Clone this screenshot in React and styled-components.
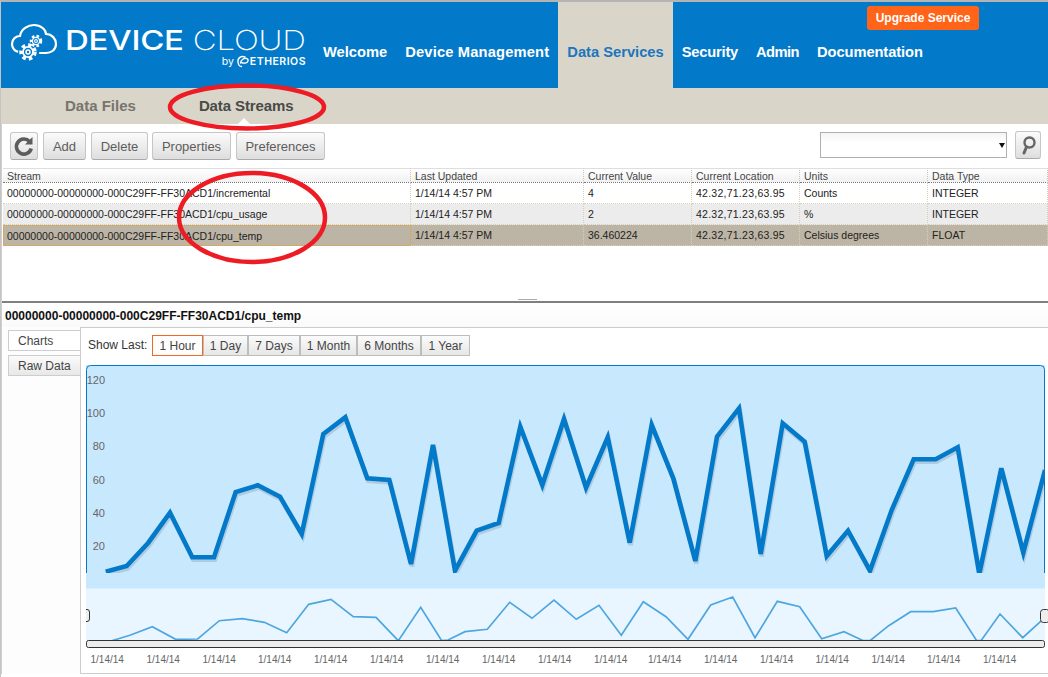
import React from 'react';
import styled, { createGlobalStyle } from 'styled-components';

const GlobalStyle = createGlobalStyle`
  html, body {
    margin: 0;
    padding: 0;
    background: #fff;
  }
  * {
    box-sizing: border-box;
  }
`;

const Page = styled.div`
  position: relative;
  width: 1048px;
  height: 677px;
  overflow: hidden;
  background: #fff;
  border-top: 2px solid #b4b4b4;
  border-left: 1px solid #c4c4c4;
  font-family: "Liberation Sans", Arial, sans-serif;
  color: #333;
`;

const Header = styled.header`
  display: flex;
  height: 86px;
  background: #0279c9;
  color: #fff;
`;

const Logo = styled.div`
  display: flex;
  width: 313px;
  padding: 21px 0 0 9px;
`;

const LogoText = styled.div`
  display: flex;
  flex-direction: column;
  width: 241px;
  margin-left: 5px;
  padding-top: 4px;
`;

const Wordmark = styled.div`
  font-family: Inter, "Liberation Sans", sans-serif;
  font-size: 27.5px;
  line-height: 26px;
  white-space: nowrap;
  letter-spacing: -0.2px;
  transform: scaleX(1.2);
  transform-origin: left center;
`;

const WordBold = styled.span`
  font-weight: 500;
`;

const WordLight = styled.span`
  font-weight: 200;
`;

const ByLine = styled.div`
  display: flex;
  align-items: center;
  align-self: flex-end;
  margin-top: 2px;
  font-family: Inter, "Liberation Sans", sans-serif;
  font-size: 10.5px;
  font-weight: 600;
  line-height: 12px;
  letter-spacing: 0.5px;
`;

const ByWord = styled.span`
  font-weight: 400;
  letter-spacing: 0;
  margin-right: 2px;
`;

const NavArea = styled.div`
  display: grid;
  width: 665px;
`;

const Nav = styled.nav`
  grid-area: 1 / 1;
  display: flex;
`;

const NavItem = styled.a`
  display: flex;
  align-items: center;
  padding: 14px 9px 0;
  font-size: 14.7px;
  font-weight: bold;
  white-space: nowrap;
  letter-spacing: ${(p) => p.$track || 0}px;
  color: ${(p) => (p.$active ? '#1a76be' : '#fff')};
  background: ${(p) => (p.$active ? '#d9d5c9' : 'transparent')};
`;

const UpgradeButton = styled.button`
  grid-area: 1 / 1;
  justify-self: end;
  align-self: start;
  width: 112px;
  height: 24px;
  margin-top: 4px;
  padding: 0;
  border: 0;
  border-radius: 3px;
  background: #ff6418;
  color: #fff;
  font-family: inherit;
  font-size: 12px;
  font-weight: bold;
`;

const SubBar = styled.div`
  display: flex;
  align-items: center;
  gap: 63px;
  height: 36px;
  padding: 0 0 2px 64px;
  background: #d9d5c9;
`;

const SubTab = styled.a`
  position: relative;
  font-size: 15px;
  font-weight: bold;
  letter-spacing: ${(p) => (p.$active ? '-0.1px' : '0')};
  color: ${(p) => (p.$active ? '#4a4a48' : '#78746e')};

  ${(p) => p.$active && `
    &::after {
      content: '';
      position: absolute;
      left: 37px;
      top: 21px;
      border: 8px solid transparent;
      border-top: 0;
      border-bottom-color: #fff;
    }
  `}
`;

const Main = styled.main`
  border-left: 1px solid #cfcfcf;
`;

const Toolbar = styled.div`
  display: flex;
  align-items: flex-start;
  height: 44px;
  padding: 8px 7px 0 8px;
`;

const ToolButton = styled.button`
  display: flex;
  align-items: center;
  justify-content: center;
  width: ${(p) => p.$w}px;
  height: 28px;
  margin-right: ${(p) => p.$gap}px;
  padding: 0;
  border: 1px solid #c6c6c6;
  border-bottom-color: #aaa;
  border-radius: 3px;
  background: linear-gradient(#fbfbfb, #dedede);
  color: #5c5c5c;
  font-family: inherit;
  font-size: 13px;
`;

const Combo = styled.div`
  display: flex;
  align-items: center;
  justify-content: flex-end;
  width: 187px;
  height: 26px;
  margin-left: auto;
  padding-right: 1px;
  border: 1px solid #b0b0b0;
  background: linear-gradient(#f4f4f4, #fff 40%);
`;

const ComboArrow = styled.span`
  width: 0;
  height: 0;
  border: 3.5px solid transparent;
  border-top: 5px solid #111;
  border-bottom: 0;
`;

const SearchButton = styled(ToolButton)`
  margin: -1px 0 0 8px;
`;

const GridPanel = styled.section`
  height: 131px;
  padding-left: 1px;
`;

const Table = styled.table`
  width: 1045px;
  table-layout: fixed;
  border-collapse: separate;
  border-spacing: 0;
  font-size: 10.5px;
`;

const HeadCell = styled.th`
  width: ${(p) => p.$w}px;
  height: 15px;
  padding: 0 0 0 4px;
  border-top: 1px solid #dedede;
  border-bottom: 1px dotted #777;
  border-right: 1px dotted #c9c4b4;
  background: linear-gradient(#fff, #f1f1f1);
  font-weight: normal;
  text-align: left;
  color: #444;
  white-space: nowrap;
`;

const Cell = styled.td`
  height: 21px;
  padding: 0 0 0 4px;
  border-bottom: 1px dotted #d6cfb9;
  border-right: 1px dotted #d6cfb9;
  white-space: nowrap;
  letter-spacing: ${(p) => p.$track || 0}px;
  color: #222;
`;

const FocusCell = styled(Cell)`
  padding-left: 3px;
  border: 1px dotted #e8a030;
`;

const Row = styled.tr`
  background: ${(p) => (p.$selected ? '#bcb4a4' : p.$alt ? '#ececec' : '#fff')};
`;

const Splitter = styled.div`
  height: 4px;
  border-bottom: 2px solid #808080;
`;

const Grip = styled.div`
  width: 19px;
  height: 1px;
  margin-left: 516px;
  background: #aaa;
`;

const DetailTitle = styled.h2`
  height: 24px;
  margin: 0;
  padding-left: 3px;
  background: linear-gradient(#fff, #fafafa);
  color: #111;
  font-size: 12px;
  font-weight: bold;
  line-height: 26px;
`;

const DetailBody = styled.div`
  display: flex;
  height: 347px;
`;

const Rail = styled.div`
  width: 78px;
  padding: 3px 0 0 6px;
  background: #fdfdfd;
`;

const RailTab = styled.div`
  width: 72px;
  height: 21px;
  margin-bottom: 4px;
  padding-left: 9px;
  border: 1px solid #cdcdcd;
  border-right: 0;
  background: ${(p) => (p.$active ? '#fff' : 'linear-gradient(#fbfbfb, #e8e8e8)')};
  color: #444;
  font-size: 12px;
  line-height: 21px;
`;

const ChartPane = styled.div`
  flex: 1;
  border-top: 1px solid #cdcdcd;
  border-left: 1px solid #cdcdcd;
  border-bottom: 1px solid #cdcdcd;
`;

const RangeBar = styled.div`
  display: flex;
  align-items: center;
  height: 28px;
  padding: 7px 0 0 7px;
`;

const RangeLabel = styled.span`
  width: 64px;
  margin-bottom: 2px;
  color: #333;
  font-size: 12px;
`;

const RangeButton = styled.button`
  width: ${(p) => p.$w}px;
  height: 21px;
  padding: 0;
  border: 1px solid ${(p) => (p.$active ? '#f0691e' : '#bdbdbd')};
  background: ${(p) => (p.$active ? '#fdfdfd' : 'linear-gradient(#fbfbfb, #e6e6e6)')};
  color: #444;
  font-family: inherit;
  font-size: 12px;
`;

const ChartSvg = styled.svg`
  display: block;
  margin: 9px 0 0 5px;
`;

const AxisText = styled.text`
  fill: #666;
  font-family: "Liberation Sans", Arial, sans-serif;
  font-size: ${(p) => p.$size}px;
`;

const Annotations = styled.svg`
  position: absolute;
  left: -1px;
  top: -2px;
  pointer-events: none;
`;

const columns = [
  ['Stream', 408],
  ['Last Updated', 173],
  ['Current Value', 108],
  ['Current Location', 108],
  ['Units', 128],
  ['Data Type', 120],
];

const streams = [
  ['00000000-00000000-000C29FF-FF30ACD1/incremental', '1/14/14 4:57 PM', '4', '42.32,71.23,63.95', 'Counts', 'INTEGER'],
  ['00000000-00000000-000C29FF-FF30ACD1/cpu_usage', '1/14/14 4:57 PM', '2', '42.32,71.23,63.95', '%', 'INTEGER'],
  ['00000000-00000000-000C29FF-FF30ACD1/cpu_temp', '1/14/14 4:57 PM', '36.460224', '42.32,71.23,63.95', 'Celsius degrees', 'FLOAT'],
];

const ranges = [
  ['1 Hour', 51, true],
  ['1 Day', 45],
  ['7 Days', 52],
  ['1 Month', 57],
  ['6 Months', 64],
  ['1 Year', 49],
];

const tools = [
  ['Add', 43, 5],
  ['Delete', 57, 4],
  ['Properties', 79, 5],
  ['Preferences', 89, 0],
];

const mainLine = '105.7,571.7 126.7,566 148.3,542.7 170,512.7 192.3,557.3 214,557.3 235.7,492 257.7,485.3 280,496.7 301.7,534 323.3,434 345.3,417.3 367.3,478.3 389.3,480 411,564 433,445 455,570.7 476.7,530.7 498.7,523 520.3,426.7 542.3,485 564,419 586,487.7 607.7,437.3 629.7,542.7 651.7,425 673.3,478.3 695.3,561 717,436.7 739,408.3 760.7,554 782.7,423.3 804.7,441.7 826.7,556 848,530.7 870,570.7 891.7,510 913.7,459.3 935.7,459.3 957.7,447.3 979.3,574 1001.3,468.3 1023.3,552.7 1045,470';

const miniLine = '111.7,640.7 130,635.3 152.3,626.7 175.7,639.3 197.7,639 219.3,620.7 242.3,618.7 264.3,622.3 286.7,632.7 308.7,604.3 331,599.3 353.3,616.7 376,617.3 398.3,640.7 420.7,607.3 441.7,640.7 448,640 465,631.7 487.3,629.3 509.7,602.3 532,618.3 554,600 576.3,619.3 599,605.3 621.3,635.3 643.3,601.7 666,616.7 688,639.3 710.7,605 732.7,597 755,637.7 777.3,601.3 799.7,606.7 821.7,638.7 844,631.7 863.3,640.7 870,640.7 888.7,625.7 910.7,611.7 933.3,611.7 955.7,608 976.7,640.7 981,640.7 1000,614 1022.7,637.7 1044,618.3';

const yTicks = [['120', 384], ['100', 417], ['80', 450], ['60', 484], ['40', 517], ['20', 550]];
const xTicks = [90.5, 146.5, 202.5, 258, 314, 370, 426, 482, 538, 594, 648, 704, 760, 815.5, 871.5, 927, 983];

function Gear({ cx, cy, r }) {
  return (
    <g fill="none" stroke="#fff">
      <circle cx={cx} cy={cy} r={r} strokeWidth={r * 0.5} strokeDasharray={`${r * 0.5} ${r * 0.44}`} />
      <circle cx={cx} cy={cy} r={r * 0.72} strokeWidth={r * 0.26} />
      <circle cx={cx} cy={cy} r={r * 0.28} strokeWidth={r * 0.22} />
    </g>
  );
}

function CloudMark() {
  return (
    <svg width="50" height="40" viewBox="10 23 50 40">
      <path
        d="M20 52 C14 52 12 47 12 44 C12 39 16 36 20 36 C21 29 28 25 34 25 C41 25 46 30 46 34 C52 34 56 39 56 44 C56 50 51 53 46 53 L40 53"
        fill="none"
        stroke="#fff"
        strokeWidth="2.2"
        strokeLinecap="round"
      />
      <circle cx="28" cy="52" r="10" fill="#0279c9" />
      <Gear cx={28} cy={52} r={7} />
      <Gear cx={36} cy={41} r={5} />
    </svg>
  );
}

function SwirlMark() {
  return (
    <svg width="14" height="13" viewBox="0 0 14 13">
      <path
        d="M9 2 C5 0.5 1.5 3 2 7 C2.3 10 4 11.5 5.5 11.5 M4.5 8 C5 4.5 8 3 10.5 3.5 C13 4.2 12.5 7.5 9.5 8 C8 8.2 6.5 8 5.5 7.5"
        fill="none"
        stroke="#fff"
        strokeWidth="1.4"
        strokeLinecap="round"
      />
    </svg>
  );
}

function RefreshGlyph() {
  return (
    <svg width="26" height="26" viewBox="0 0 26 26">
      <path d="M18.5 8.5 A7.5 7.5 0 1 0 20.2 15.5" fill="none" stroke="#5c5c5c" strokeWidth="3.6" />
      <path d="M21.5 4 V11.5 H14 Z" fill="#5c5c5c" />
    </svg>
  );
}

function SearchGlyph() {
  return (
    <svg width="18" height="20" viewBox="0 0 18 20">
      <circle cx="10.5" cy="7.5" r="5" fill="none" stroke="#666" strokeWidth="2.4" />
      <path d="M7.5 12 L5 18" stroke="#666" strokeWidth="3" strokeLinecap="round" />
    </svg>
  );
}

function Chart() {
  return (
    <ChartSvg width="962" height="303" viewBox="86 365 962 303">
      <defs>
        <clipPath id="mainClip">
          <rect x="86" y="365" width="959" height="208" />
        </clipPath>
        <clipPath id="miniClip">
          <rect x="86" y="588" width="959" height="53" />
        </clipPath>
      </defs>
      <rect x="86" y="365" width="959" height="224" fill="#c8e8fe" />
      <rect x="86" y="588.5" width="959" height="52" fill="#eaf6ff" />
      <path
        d="M86.5 573 V369.5 Q86.5 365.5 90.5 365.5 H1040.5 Q1044.5 365.5 1044.5 369.5 V573"
        fill="none"
        stroke="#0279c9"
      />
      {yTicks.map(([label, y]) => (
        <AxisText key={label} $size={11} x="105" y={y} textAnchor="end">{label}</AxisText>
      ))}
      <g clipPath="url(#mainClip)" fill="none" strokeLinejoin="miter">
        <polyline points={mainLine} stroke="#000" strokeOpacity="0.12" strokeWidth="4.6" transform="translate(1 2.5)" />
        <polyline points={mainLine} stroke="#0279c9" strokeWidth="4.6" />
      </g>
      <polyline clipPath="url(#miniClip)" points={miniLine} fill="none" stroke="#4ea6e0" strokeWidth="1.7" />
      <rect x="86.5" y="640.5" width="958" height="7" rx="2" fill="#ededed" stroke="#333" />
      <path d="M86 609.5 H87 Q89.5 609.5 89.5 612 V619 Q89.5 621.5 87 621.5 H86" fill="#eee" stroke="#333" />
      <rect x="1040.5" y="609.5" width="9" height="13" rx="3" fill="#eee" stroke="#333" />
      {xTicks.map((x) => (
        <AxisText key={x} $size={10} x={x} y="663">1/14/14</AxisText>
      ))}
    </ChartSvg>
  );
}

export default function App() {
  return (
    <Page>
      <GlobalStyle />
      <Header>
        <Logo>
          <CloudMark />
          <LogoText>
            <Wordmark>
              <WordBold>DEVICE</WordBold> <WordLight>CLOUD</WordLight>
            </Wordmark>
            <ByLine>
              <ByWord>by</ByWord>
              <SwirlMark />
              ETHERIOS
            </ByLine>
          </LogoText>
        </Logo>
        <NavArea>
          <Nav>
            <NavItem>Welcome</NavItem>
            <NavItem $track={0.17}>Device Management</NavItem>
            <NavItem $active>Data Services</NavItem>
            <NavItem $track={-0.2}>Security</NavItem>
            <NavItem $track={-0.55}>Admin</NavItem>
            <NavItem $track={-0.08}>Documentation</NavItem>
          </Nav>
          <UpgradeButton>Upgrade Service</UpgradeButton>
        </NavArea>
      </Header>
      <SubBar>
        <SubTab>Data Files</SubTab>
        <SubTab $active>Data Streams</SubTab>
      </SubBar>
      <Main>
        <Toolbar>
          <ToolButton $w={28} $gap={5}>
            <RefreshGlyph />
          </ToolButton>
          {tools.map(([label, w, gap]) => (
            <ToolButton key={label} $w={w} $gap={gap}>{label}</ToolButton>
          ))}
          <Combo>
            <ComboArrow />
          </Combo>
          <SearchButton $w={26}>
            <SearchGlyph />
          </SearchButton>
        </Toolbar>
        <GridPanel>
          <Table>
            <thead>
              <tr>
                {columns.map(([label, w]) => (
                  <HeadCell key={label} $w={w}>{label}</HeadCell>
                ))}
              </tr>
            </thead>
            <tbody>
              {streams.map((row, i) => (
                <Row key={row[0]} $alt={i === 1} $selected={i === 2}>
                  {row.map((value, j) => (
                    i === 2 && j === 0
                      ? <FocusCell key={j}>{value}</FocusCell>
                      : <Cell key={j} $track={j === 3 ? 0.25 : 0}>{value}</Cell>
                  ))}
                </Row>
              ))}
            </tbody>
          </Table>
        </GridPanel>
        <Splitter>
          <Grip />
        </Splitter>
        <DetailTitle>00000000-00000000-000C29FF-FF30ACD1/cpu_temp</DetailTitle>
        <DetailBody>
          <Rail>
            <RailTab $active>Charts</RailTab>
            <RailTab>Raw Data</RailTab>
          </Rail>
          <ChartPane>
            <RangeBar>
              <RangeLabel>Show Last:</RangeLabel>
              {ranges.map(([label, w, active]) => (
                <RangeButton key={label} $w={w} $active={active}>{label}</RangeButton>
              ))}
            </RangeBar>
            <Chart />
          </ChartPane>
        </DetailBody>
      </Main>
      <Annotations width="1048" height="677" viewBox="0 0 1048 677">
        <g fill="none" stroke="#ed1c24" strokeWidth="4.5">
          <ellipse cx="247" cy="107" rx="77" ry="21.5" />
          <ellipse cx="252" cy="217.5" rx="73" ry="44.5" />
        </g>
      </Annotations>
    </Page>
  );
}
